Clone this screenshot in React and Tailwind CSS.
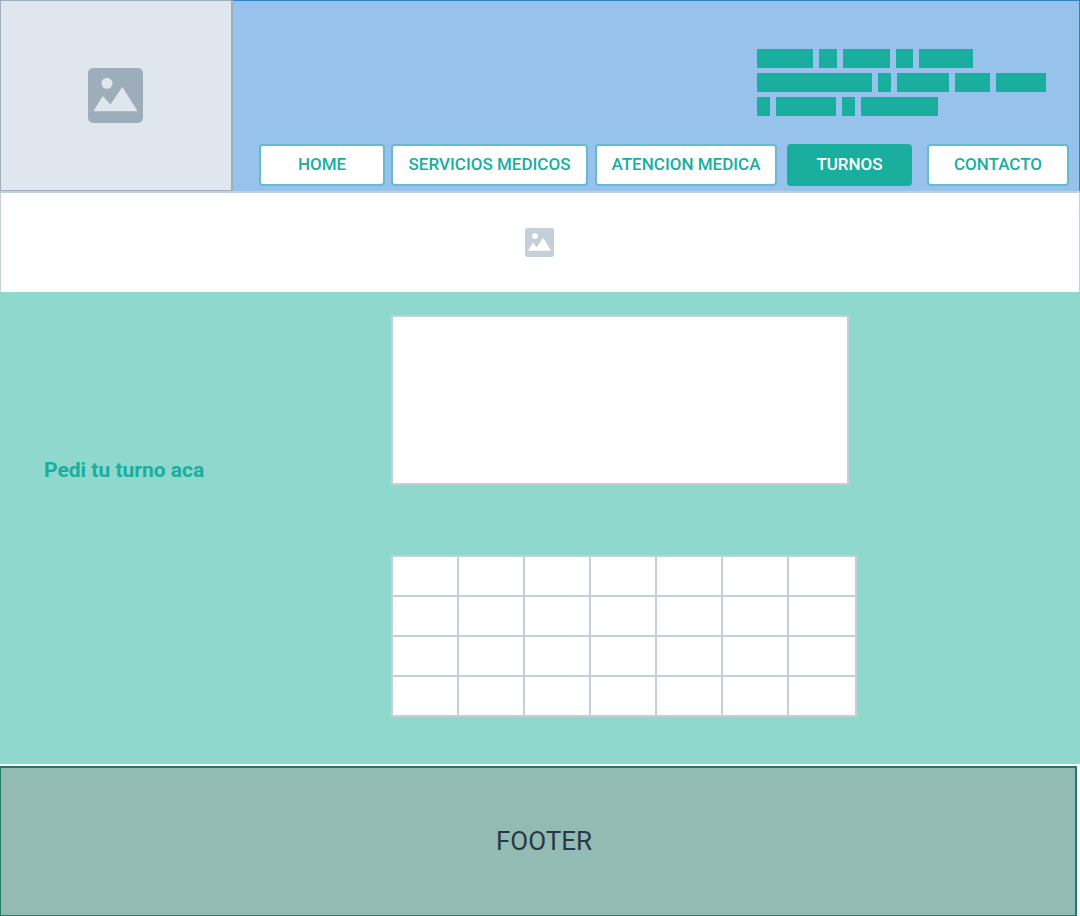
const navItems = [
  { label: 'HOME', box: 'w-[126px]' },
  { label: 'SERVICIOS MEDICOS', box: 'w-[197px] ml-1.5' },
  { label: 'ATENCION MEDICA', box: 'w-[182px] ml-[7px]' },
  { label: 'TURNOS', box: 'w-[125px] ml-2.5', active: true },
  { label: 'CONTACTO', box: 'w-[142px] ml-[15px]' },
];

const textBlocks = [
  [56, 18, 47, 17, 54],
  [115, 13, 52, 35, 50],
  [13, 60, 13, 77],
];

function ImageIcon({ className }) {
  return (
    <svg viewBox="0 0 55 55" className={className} aria-hidden="true">
      <rect width="55" height="55" rx="5" fill="currentColor" />
      <circle cx="19" cy="15.3" r="5.5" className="fill-(--cut)" />
      <path
        d="M6 42.3L14 29Q14.7 27.8 15.5 28.8L22.4 36.4L33.6 20Q34.3 19 35 20L49 42.3Q49.2 43.2 48.4 43.2H6.4Q5.6 43.2 6 42.3Z"
        className="fill-(--cut)"
      />
    </svg>
  );
}

function Header() {
  return (
    <header className="flex min-h-[191px]">
      <a
        href="#home"
        aria-label="Home"
        className="flex w-[233px] shrink-0 items-center justify-center border border-r-2 border-[#9eadba] bg-[#dfe6ed] pr-0.5"
      >
        <ImageIcon className="size-[55px] text-[#9eadba] [--cut:#dfe6ed]" />
      </a>
      <div className="flex grow flex-col items-end justify-between border-t border-r border-[#3183c8] bg-[#96c2eb] pt-12 pr-2.5 pb-[5px]">
        <div className="flex w-[312px] flex-col gap-[5px]">
          {textBlocks.map((row, i) => (
            <div key={i} className="flex gap-1.5">
              {row.map((width, j) => (
                <span key={j} className="h-[19px] bg-[#1aae9f]" style={{ width }} />
              ))}
            </div>
          ))}
        </div>
        <nav className="flex">
          {navItems.map(({ label, box, active }) => (
            <a
              key={label}
              href="#"
              aria-current={active ? 'page' : undefined}
              className={`${box} flex h-[42px] items-center justify-center rounded border-2 text-[17px] font-medium whitespace-nowrap ${
                active
                  ? 'border-[#1aae9f] bg-[#1aae9f] text-white'
                  : 'border-[#68bace] bg-white text-[#1aae9f]'
              }`}
            >
              {label}
            </a>
          ))}
        </nav>
      </div>
    </header>
  );
}

function Calendar() {
  return (
    <table aria-label="Turnos" className="w-[466px] table-fixed border-collapse bg-white">
      <colgroup>
        {[0, 1, 2, 3, 4, 5].map((c) => (
          <col key={c} className="w-[66px]" />
        ))}
        <col />
      </colgroup>
      <tbody>
        {[0, 1, 2, 3].map((r) => (
          <tr key={r} className="h-10">
            {[0, 1, 2, 3, 4, 5, 6].map((c) => (
              <td key={c} className="border-2 border-[#c3cfd9] p-0" />
            ))}
          </tr>
        ))}
      </tbody>
    </table>
  );
}

export default function App() {
  return (
    <div className="bg-white font-[Roboto,sans-serif]">
      <Header />
      <section className="flex h-[101px] items-center justify-center border-x border-t-2 border-[#c3cfd9] bg-white pr-0.5">
        <ImageIcon className="size-[29px] text-[#c3cfd9] [--cut:#ffffff]" />
      </section>
      <main className="flex bg-[#8ed8ce] pt-[23px] pb-[47px]">
        <h1 className="w-[391px] shrink-0 pt-[141px] pl-11 text-[21px] leading-7 font-bold text-[#1aae9f]">
          Pedi tu turno aca
        </h1>
        <div className="flex flex-col gap-[70px]">
          <div className="h-[170px] w-[458px] border-2 border-[#c3cfd9] bg-white" />
          <Calendar />
        </div>
      </main>
      <footer className="mt-0.5 mr-[3px] flex h-[150px] items-center justify-center border border-t-2 border-r-2 border-[#227a6a] bg-[#91bbb3] pl-3 text-[26px] text-[#293845]">
        FOOTER
      </footer>
    </div>
  );
}
